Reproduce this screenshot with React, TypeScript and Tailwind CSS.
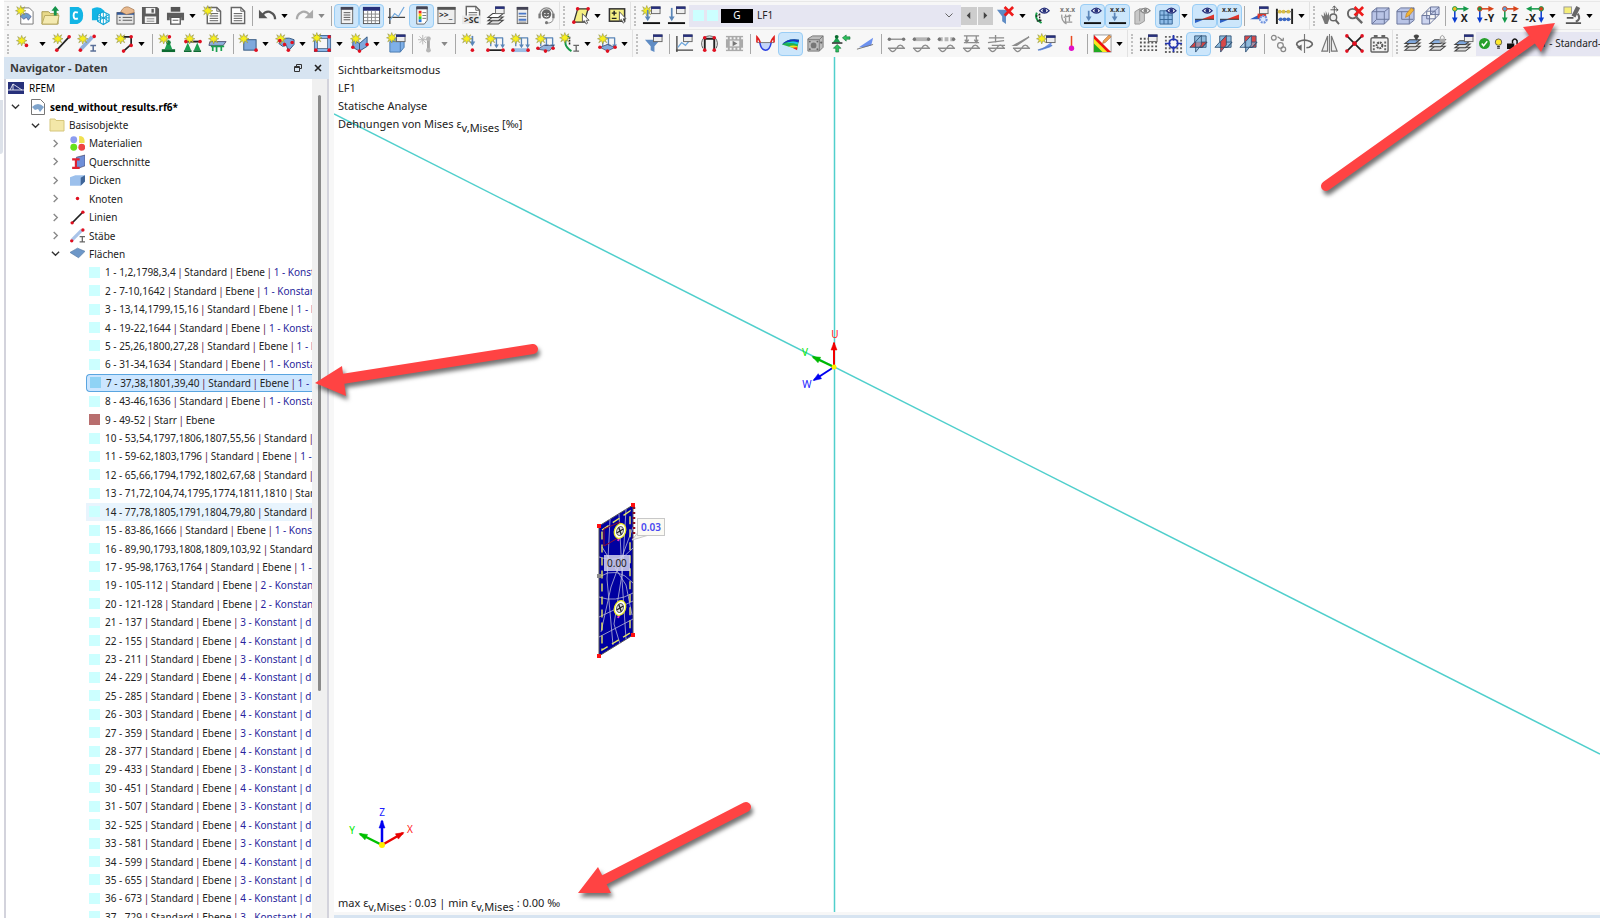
import React from 'react';
import clsx from 'clsx';

/* ---------- drawing helpers, all on a 20 x 20 grid ---------- */

const Star = ({ x = 5, y = 5 }: { x?: number; y?: number }) => (
  <path
    transform={`translate(${x} ${y})`}
    d="M0-5.5 1.2-2.2 4.2-4.2 2.6-1.1 5.5 0 2.6 1.1 4.2 4.2 1.2 2.2 0 5.5-1.2 2.2-4.2 4.2-2.6 1.1-5.5 0-2.6-1.1-4.2-4.2-1.2-2.2Z"
    fill="#f7ee1c"
    stroke="#8f8f4a"
    strokeWidth=".6"
  />
);
const Dot = ({ x, y, c = '#e01020', r = 1.9 }: { x: number; y: number; c?: string; r?: number }) => (
  <circle cx={x} cy={y} r={r} fill={c} />
);
const Win = ({ x = 10, y = 1 }: { x?: number; y?: number }) => (
  <g>
    <rect x={x} y={y} width="9" height="7" fill="#eee" stroke="#666" />
    <rect x={x - 0.5} y={y - 0.5} width="10" height="2.6" fill="#27307a" />
  </g>
);
const Eye = ({ x = 14, y = 5, c = '#27307a' }: { x?: number; y?: number; c?: string }) => (
  <g transform={`translate(${x} ${y})`}>
    <path d="M-5 0Q0-5.5 5 0Q0 5 -5 0Z" fill="#fff" stroke={c} strokeWidth="1.2" />
    <circle r="2.1" fill={c} />
  </g>
);
const Line = ({ d, c = '#444', w = 1.4 }: { d: string; c?: string; w?: number }) => (
  <path d={d} fill="none" stroke={c} strokeWidth={w} />
);
const Down = ({ x, y1, y2, c = '#5b86b8' }: { x: number; y1: number; y2: number; c?: string }) => (
  <g>
    <path d={`M${x} ${y1}V${y2 - 3}`} stroke={c} strokeWidth="1.8" />
    <path d={`M${x - 3} ${y2 - 5}h6L${x} ${y2}Z`} fill={c} />
  </g>
);
const Page = ({ x = 4, y = 1 }: { x?: number; y?: number }) => (
  <g transform={`translate(${x} ${y})`}>
    <path d="M.5.5h10l4 4v13H.5Z" fill="#fff" stroke="#666" strokeWidth="1.5" />
    <path d="M3 7h9M3 9.5h9M3 12h9M3 14.5h9" stroke="#555" />
    <path d="M10.5.5v4h4" fill="none" stroke="#666" />
  </g>
);
const Layers = ({ top = '#7ea6dc', dy = 0 }: { top?: string; dy?: number }) => (
  <g transform={`translate(0 ${dy})`} stroke="#444" strokeWidth="1.1">
    <path d="M1 17h11l5-4H6Z" fill="#ddd" />
    <path d="M1 13.500h11l5-4H6Z" fill="#ddd" />
    <path d="M1 10h11l5-4H6Z" fill={top} />
  </g>
);
const Planes = ({ a, b, c }: { a: string; b: string; c: string }) => (
  <g stroke="#2d4f72" strokeWidth=".9">
    <path d="M6 2h12v12H6Z" fill={a} />
    <path d="M1 14 6 8.500h13L14 14Z" fill={b} />
    <path d="M7 8 13 1.500v10L7 19Z" fill={c} />
    <path d="M7 14h7l5-5.500" fill="none" />
  </g>
);
const Grey = ({ k }: { k: number }) => (
  <g fill="none" stroke="#8c8c8c" strokeWidth="1.4">
    {k === 0 && <path d="M2 5.500h16" />}
    {k === 1 && <path d="M2 5.500h16" stroke="#b5b5b5" strokeWidth="4" />}
    {k === 2 && <path d="M2 5.500h16" stroke="#b5b5b5" strokeWidth="4" strokeDasharray="4 2" />}
    {k === 3 && <path d="M2 2h16M5 2v7M15 2v7M2 9h16M3 6l2 3 2-3M13 6l2 3 2-3" />}
    {k === 4 && <path d="M2 4h16M1 9l17-2M9 1v8M5 12h14" />}
    {k === 5 && <path d="M2 12 18 3 5 12Z" fill="#bbb" />}
    {k < 3 && (
      <g fill="#777" stroke="none">
        <circle cx="2.500" cy="5.500" r="1.800" />
        <circle cx="17.500" cy="5.500" r="1.800" />
      </g>
    )}
    <path d="M1 15h18M2 15Q6 22 10 15Q14 8.500 18 15" />
  </g>
);
const Axis = ({ a, b, t, o, flip = false }: { a: string; b: string; t: string; o: string; flip?: boolean }) => (
  <g>
    <path d={flip ? 'M16 3H4' : 'M4 3H15'} stroke={a} strokeWidth="1.6" />
    <path d={flip ? 'M6 0 0 3l6 3Z' : 'M13 0l6 3-6 3Z'} fill={a} />
    <path d={flip ? 'M16 3V14' : 'M4 3V14'} stroke={b} strokeWidth="1.600" />
    <path d={flip ? 'M13 12h6l-3 6Z' : 'M1 12h6l-3 6Z'} fill={b} />
    <circle cx={flip ? 16 : 4} cy="3" r="2.400" fill={o} stroke={a} />
    <text x={flip ? 5 : 14} y="17" fontSize="11" fontWeight="700" textAnchor="middle" fill="#222">
      {t}
    </text>
  </g>
);
const Loads = ({ y = 16, children }: { y?: number; children?: React.ReactNode }) => (
  <g>
    <Line d="M7 4h11M11 4v9M17.500 4v9M5 7v6" c="#5b86b8" />
    <path d="M8.500 11h5L11 15ZM15 11h5l-2.500 4Z" fill="#5b86b8" />
    {children}
    <Star x={5} y={5} />
    <Dot x={2} y={y + 1} />
    <Dot x={18} y={y + 1} />
  </g>
);
const Xs = ({ c = '#333' }: { c?: string }) => (
  <text x="10" y="6" fontSize="7" fontWeight="700" textAnchor="middle" fill={c}>
    x.x.x
  </text>
);
const Wedge = () => (
  <g>
    <path d="M0 14H10L0 18Z" fill="#2c5fc4" />
    <path d="M7 14 20 9v5Z" fill="#e0352b" />
    <Line d="M0 14h20" c="#333" w={1} />
  </g>
);

const icons: Record<string, React.ReactNode> = {
  newModel: (<><path d="M5 2h9l4 4v13H5Z" fill="#fff" stroke="#777" /><path d="M5 11q5-7 11 0l-3 4-2-3-3 2Z" fill="#6d9ccc" stroke="#447" strokeWidth=".6" /><Star /></>),
  open: (<><path d="M1 6h7l2 2h8v11H1Z" fill="#e8d98a" stroke="#a89a50" /><path d="M4 10h15l-2 9H1Z" fill="#f4eab0" stroke="#b8aa60" /><path d="M15 0l4 5h-2.500v5h-3V5H11Z" fill="#14934a" /></>),
  cloudD: (<><path d="M4 1h9q5 2 5 9t-6 9H4Z" fill="#12b5e5" /><path d="M12.500 7Q8 5 8 10t4.500 3" fill="none" stroke="#fff" strokeWidth="2" /></>),
  cloudMesh: (<><path d="M1 3q7-4 13 2v10H1Z" fill="#12b5e5" /><path d="M13 6l6 3v7l-6 3.500L7 16V9Z" fill="#fff" stroke="#12a5d5" strokeWidth="1.300" /><path d="M13 6v13M7 9l12 7M19 9 7 16M7 12.500h12M10 7.500v10M16 7.500v10" stroke="#12a5d5" /></>),
  handSheet: (<><rect x="1" y="7" width="18" height="12" fill="#e6e6e6" stroke="#555" /><path d="M1 8h18" stroke="#345a9a" strokeWidth="2.500" /><path d="M3 12h2M3 15h2M7 12h10M7 15h10" stroke="#555" /><path d="M5 6q3-6 8-5l6 3v3l-8 2Z" fill="#e8b98e" stroke="#93653d" strokeWidth=".6" /></>),
  save: (<><path d="M1 1h16l2 2v16H1Z" fill="#5c5c5c" /><rect x="5" y="2" width="10" height="6" fill="#f4f4f4" /><rect x="11" y="3" width="2.500" height="4" fill="#5c5c5c" /><rect x="4" y="11" width="12" height="7" fill="#f4f4f4" /><path d="M6 13.500h8M6 16h8" stroke="#888" /></>),
  print: (<><rect x="5" y="1" width="10" height="5" fill="#555" /><path d="M1 7h18v8h-3v-3H4v3H1Z" fill="#5c5c5c" /><path d="M5 12h10v7H5Z" fill="#fff" stroke="#555" strokeWidth="1.400" /><path d="M7 15h6" stroke="#555" /></>),
  newPage: (<><Page x={4} y={1} /><Star x={5} y={5} /></>),
  page: <Page x={3} />,
  undo: <><path d="M4 10q5-6 10-3 4 2 4 7" fill="none" stroke="#555" strokeWidth="2.400" /><path d="M1 4v9h9Z" fill="#555" /></>,
  redo: <><path d="M16 10q-5-6-10-3-4 2-4 7" fill="none" stroke="#aaa" strokeWidth="2.400" /><path d="M19 4v9h-9Z" fill="#aaa" /></>,
  navPanel: (<><rect x="4.500" y="1.500" width="12" height="17" fill="#f2f2f2" stroke="#666" /><rect x="4" y="1" width="13" height="3" fill="#445" /><path d="M7 7h7M7 9.500h7M7 12h7M7 14.500h7" stroke="#555" /></>),
  tablePanel: (<><rect x="1.500" y="1.500" width="17" height="17" fill="#fff" stroke="#555" /><rect x="1" y="1" width="18" height="4" fill="#27307a" /><path d="M2 8.500h16M2 12h16M2 15.500h16M6 5v13M10 5v13M14 5v13" stroke="#888" /></>),
  graph: <><Line d="M3 2v17M1 12h18" /><Line d="M3 15l5-7 4 3 6-10" c="#70a7dc" w={1.3} /></>,
  colorPanel: (<><path d="M5 1h11v14l-3 4H5Z" fill="#fff" stroke="#666" /><rect x="4.500" y=".5" width="12" height="3" fill="#445" /><rect x="7" y="5" width="3" height="3" fill="#e22" /><rect x="7" y="8" width="3" height="3" fill="#fc0" /><rect x="7" y="11" width="3" height="3" fill="#3c3" /><rect x="7" y="14" width="3" height="3" fill="#27d" /><path d="M11 7h4M11 10h4M11 13h4" stroke="#777" /></>),
  console: (<><rect x="1" y="1.500" width="18" height="17" fill="#eee" stroke="#666" /><rect x=".5" y="1" width="19" height="3" fill="#555" /><text x="2" y="13" fontSize="9" fontWeight="700" fill="#333">&gt;&gt;_</text></>),
  script: (<><Page x={4} y={0} /><rect x="0" y="10" width="20" height="9" fill="#e9e9e9" /><text x="10" y="18" fontSize="9" fontWeight="700" textAnchor="middle" fill="#333">&gt;SC</text></>),
  layersWin: <><Layers top="#fff" dy={2} /><Win x={9} y={1} /></>,
  formPanel: (<><rect x="5.500" y="1.500" width="11" height="17" fill="#eee" stroke="#666" /><path d="M5 2.500h12" stroke="#445" strokeWidth="3" /><path d="M7 8h8M7 14.500h8" stroke="#4a78c8" strokeWidth="2" /><path d="M7 11h8M7 17h8" stroke="#777" /></>),
  headset: (<><circle cx="10" cy="8.500" r="5" fill="#666" /><path d="M3 9a7 7 0 0 1 14 0" fill="none" stroke="#888" strokeWidth="1.300" /><rect x="1.500" y="8" width="2.500" height="5" fill="#777" /><rect x="16" y="8" width="2.500" height="5" fill="#777" /><path d="M7.500 8H9M11 8h1.500M7.500 10.500q2.500 2 5 0" stroke="#fff" fill="none" /><path d="M17 13q0 5-6 5" fill="none" stroke="#888" /><circle cx="10" cy="17.500" r="1.600" fill="#777" /></>),
  selectPoly: (<><path d="M3 17 7 3h11l-4 14Z" fill="#f5ef83" stroke="#333" strokeWidth="1.400" /><Dot x={7} y={3} /><Dot x={18} y={3} /><Dot x={3} y={17} /><path d="M12 8v9l2-1.500 2 3.500 1.500-1L16 15h3Z" fill="#fff" stroke="#555" /></>),
  plusMinus: (<><rect x="1.500" y="3" width="16" height="13" fill="#f5ef83" stroke="#333" strokeWidth="1.600" /><path d="M4 7.500h5M6.500 5v5M4 13h5" stroke="#222" strokeWidth="1.500" /><path d="M12 6v10l2-2 2 4 1.500-1L16 13.500h3Z" fill="#fff" stroke="#555" /></>),
  loadNew: <><Star /><Down x={6} y1={4} y2={16} /><Line d="M1 18h18" c="#111" w={2} /><Win /></>,
  load: <><Down x={5} y1={2} y2={16} /><Line d="M1 18h18" c="#111" w={2} /><Win /></>,
  filterX: <><path d="M1 4h15l-5.500 7v8l-4-3v-5Z" fill="#5f8cc4" /><path d="M9 1l9 9M18 1 9 10" stroke="#ee1c1c" strokeWidth="2.800" /></>,
  supportEye: <><path d="M4 7q-2 5 1 8l4 3" fill="none" stroke="#169a48" strokeWidth="2" /><path d="M7 8v9M3 11l4-2M4 16l5-1" stroke="#222" strokeDasharray="2 1" strokeWidth="1.400" /><Eye x={12} /></>,
  valuesGrey: <><Xs c="#777" /><Line d="M4 9q-1 6 5 10M8 9v9M12 9v7M6 12l8-2M7 17h8" c="#999" /></>,
  loadEye: <><Down x={6} y1={5} y2={16} /><Line d="M1 18h18" c="#111" w={2} /><Eye /></>,
  loadVals: <><Xs /><Down x={7} y1={7} y2={16} /><Line d="M1 18h18" c="#111" w={2} /></>,
  solidEye: <><path d="M2 6l5-3h5v13l-5 3H2Z" fill="#c8c8c8" stroke="#999" /><path d="M7 3v13" stroke="#999" /><Eye c="#888" x={13} /></>,
  meshEye: <><path d="M2 5h13v14H2Z" fill="#8fbce8" stroke="#386898" /><path d="M6.300 5v14M10.600 5v14M2 9.600h13M2 14.200h13" stroke="#386898" /><Eye /></>,
  resultEye: <><Wedge /><Eye x={13} /></>,
  resultVals: <><Wedge /><Xs /></>,
  resultGear: <><path d="M0 14 10 9v5Z" fill="#2c5fc4" /><path d="M8 8h9v5H8Z" fill="#e0352b" /><Win /><circle cx="14" cy="14" r="3.500" fill="#dce9ff" stroke="#6f92dc" strokeWidth="2.200" strokeDasharray="2 1" /></>,
  abacus: <><path d="M2 3v16M18 3v16" stroke="#222" strokeWidth="2" /><path d="M2 6h16M2 14h16" stroke="#555" /><Dot x={5} y={6} c="#d8bd45" r={2} /><Dot x={9} y={6} c="#d8bd45" r={2} /><Dot x={14} y={6} c="#d8bd45" r={2} /><Dot x={6} y={14} c="#3c68c4" r={2} /><Dot x={10} y={14} c="#3c68c4" r={2} /><Dot x={14} y={14} c="#3c68c4" r={2} /></>,
  handZoom: <><path d="M0 9l3 2V6l2 4V5l2 5 1-4 1 7-2 6H4Z" fill="#777" /><path d="M14 0v8M10 4h8M14 0l-2 2M14 0l2 2M18 4l-2-1.500M18 4l-2 1.500" stroke="#555" /><circle cx="13" cy="12" r="3.500" fill="#eee" stroke="#666" strokeWidth="1.500" /><path d="M15.500 15l3.500 4" stroke="#666" strokeWidth="2" /></>,
  zoomX: <><circle cx="7" cy="8" r="5" fill="#f4f4f4" stroke="#666" strokeWidth="2" /><path d="M11 12l6 6" stroke="#666" strokeWidth="2.500" /><path d="M9 1l9 9M18 1 9 10" stroke="#ee1c1c" strokeWidth="2.800" /></>,
  cube: <><path d="M1 6l5-4h13v12l-5 5H1Z" fill="#b9c4e6" stroke="#68749a" /><path d="M1 6h13v13M14 6l5-4M6 2v12h13M6 14l-5 5" fill="none" stroke="#68749a" /></>,
  cubePen: <><path d="M1 5l4-3h14v13l-5 4H1Z" fill="#b9c4e6" stroke="#68749a" /><path d="M1 6h13v13M14 6l5-4M6 6v8h12" fill="none" stroke="#68749a" /><path d="M10 12l1-4 5-6 3 2-5 6Z" fill="#f0b536" stroke="#b5701c" strokeWidth=".6" /></>,
  cubeWire: <><path d="M1 10h8v9H1ZM10 1h9v8h-9Z" fill="#ccd4ef" stroke="#68749a" /><path d="M1 10l9-9M9 19l10-10M9 10l10-9M6 5.500h9v8h-9Z" fill="none" stroke="#68749a" /></>,
  axX: <Axis a="#149a4a" b="#0a3cd0" o="#f0c020" t="X" />,
  axY: <Axis a="#d8431a" b="#0a3cd0" o="#149a4a" t="-Y" />,
  axZ: <Axis a="#d8431a" b="#149a4a" o="#5c9cd8" t="Z" />,
  axNX: <Axis a="#149a4a" b="#0a3cd0" o="#d8431a" t="-X" flip />,
  microscope: <><rect x="1" y="1" width="8" height="7" fill="#f5ee7a" stroke="#999" /><path d="M14 0l4 2-5 10-4-2Z" fill="#666" /><path d="M15.500 8q4 6-2 8.500" fill="none" stroke="#666" strokeWidth="2.200" /><path d="M4 12.500h7M3 18h16" stroke="#555" strokeWidth="2" /></>,

  node: <><Star x={6} y={7} /><Dot x={11} y={12} /></>,
  line: <><Line d="M4 17 17 3" c="#222" w={1.8} /><Star /><Dot x={4} y={17} /><Dot x={17} y={3} /></>,
  member: <><path d="M3 16 15 3" stroke="#8fb0dc" strokeWidth="4" /><Star /><Dot x={2.5} y={17} /><Dot x={17} y={2.500} /><Line d="M13 12h6M16 12v6M13 18h6" c="#5a6f98" w={1.6} /></>,
  poly: <><Line d="M7 3h10v8l-8 7" c="#222" w={1.8} /><Star x={6} /><Dot x={17} y={3} /><Dot x={17} y={12} /><Dot x={9} y={18} /></>,
  support: <><path d="M11 6 15 16H7Z" fill="#1ba050" /><circle cx="11" cy="9" r="2.500" fill="#14803c" /><path d="M4 17.500h14" stroke="#0b6a30" strokeWidth="3" /><Star x={6} /><Dot x={12} y={3} /></>,
  lineSupport: <><path d="M5 9l3.500 8h-7ZM15 9l3.500 8h-7Z" fill="#1ba050" /><path d="M1 18h8M11 18h8" stroke="#0b6a30" strokeWidth="2" /><Line d="M3 8h14" c="#222" w={2} /><Star x={7} /><Dot x={3} y={8} /><Dot x={18} y={8} /></>,
  surfSupport: <><path d="M2 8h17l-3 4H1Z" fill="#8fb0dc" stroke="#557" /><path d="M3 13h14M5 13v5M9 13v6M14 13v5" stroke="#1ba050" strokeWidth="1.800" /><Star x={6} /></>,
  surface: <><rect x="5" y="6" width="13" height="11" fill="#7fa8dc" stroke="#33577f" /><Star /><Dot x={18} y={17} /></>,
  shell: <><path d="M3 10q5-9 16-4v5l-6 7-2-6-4 1Z" fill="#7fa8dc" stroke="#33577f" /><Star /><Dot x={4} y={7} /><Dot x={17} y={9} /><Dot x={9} y={11} /><Dot x={13} y={17} /></>,
  opening: <><path d="M3 3h14v14H3Z" fill="none" stroke="#33577f" strokeWidth="4" /><path d="M3 3h14v14H3Z" fill="none" stroke="#8fb8e8" strokeWidth="2.500" /><Star x={4} y={4} /><Dot x={17} y={3} /><Dot x={17} y={17} /><Dot x={3} y={17} /></>,
  folded: <><path d="M3 6l7 4 8-7v10l-8 5-7-4Z" fill="#7fa8dc" stroke="#33577f" /><path d="M10 10v8" stroke="#33577f" /><Star x={6} /><Dot x={3} y={14} /><Dot x={10} y={18} /><Dot x={18} y={11} /></>,
  solid: <><path d="M3 8l4-3h11v9l-4 5H3Z" fill="#7fb0e8" stroke="#4a7ab0" /><path d="M3 8h11v11M14 8l4-3" fill="none" stroke="#4a7ab0" /><Star x={5} y={4} /><Win x={10} y={1} /></>,
  hinge: <g opacity=".5"><path d="M11 3v15" stroke="#555" strokeWidth="3" /><path d="M5 1v10M0 6h10M1.500 2.500l7 7M8.500 2.500l-7 7" stroke="#777" /><circle cx="11" cy="5" r="2.500" fill="#777" /><circle cx="11" cy="17" r="2.500" fill="#777" /></g>,
  nodeLoad: <><Down x={12} y1={2} y2={13} /><Star x={6} /><Dot x={12} y={17} /></>,
  lineLoad: <Loads><Line d="M2 17h16" c="#222" w={1.800} /></Loads>,
  memberLoad: <Loads><Line d="M2 17h16" c="#9dbde4" w={4} /></Loads>,
  surfLoad: <Loads y={14}><path d="M2 16 8 12h11l-5 6Z" fill="#8fb0dc" stroke="#335" strokeWidth=".7" /><Dot x={10} y={18} /></Loads>,
  imperf: <><path d="M8 2q-8 9 3 16" fill="none" stroke="#169a48" strokeWidth="2" /><path d="M9 3v9" stroke="#222" strokeDasharray="2 1" strokeWidth="1.600" /><Star x={4} y={4} /><Line d="M13 12h6M16 12v6M13 18h6" c="#666" /></>,
  freeLoad: <Loads y={13}><path d="M2 14l8-3 8 3-8 4Z" fill="#7fa8dc" stroke="#335" strokeWidth=".7" /><Dot x={10} y={18} /></Loads>,
  filterWin: <><path d="M1 6h16l-6 7v6l-4-2v-4Z" fill="#5f8cc4" /><Win /></>,
  diagram: <><Line d="M2 2v17M1 17h18" /><Line d="M3 14l4-5 4 3 5-6" c="#70a7dc" /><Win x={9} y={1} /></>,
  frame: <><path d="M5 17V5h10v12" fill="none" stroke="#222" strokeWidth="2" /><path d="M4 4q6-4 12 0M3 15Q0 9 4 4M17 15q3-6-1-11" fill="none" stroke="#555" /><Dot x={5} y={4} /><Dot x={15} y={4} /><Dot x={5} y={17} /><Dot x={15} y={17} /></>,
  film: <><rect x="1" y="2" width="18" height="16" fill="#aaa" /><path d="M1 4.500h18M1 15.500h18" stroke="#f4f4f4" strokeWidth="2" strokeDasharray="2 2" /><rect x="5" y="7" width="10" height="6" fill="#eee" /><path d="M8 7v6l5-3Z" fill="#777" /></>,
  moment: <><path d="M4 9h12q-1 8-6 8T4 9Z" fill="#c4d4f8" /><path d="M1 9h18" stroke="#777" /><path d="M4 9q1.500 8 6 8t6-8" fill="none" stroke="#2a3ee0" strokeWidth="1.600" /><path d="M1 9V3q2 2 3.500 6M19 9V3q-2 2-3.500 6" fill="none" stroke="#e02020" strokeWidth="1.700" /></>,
  contour: <><path d="M1 11q6-7 18-5l-2 10Z" fill="#22b14c" /><path d="M1 11q6-7 18-5l-.5 3Q8 6 1 11Z" fill="#1930c8" /><path d="M3 11q8-5 15-2l-.4 2Q9 8 3 11Z" fill="#19c8e8" /><path d="M8 13q5-2 9.500 0L17 16Z" fill="#f5e020" /><path d="M12 14.500l5-.5v3Z" fill="#e22" /></>,
  dice: <><path d="M2 5l5-3h11v12l-4 4H2Z" fill="#bbb" stroke="#777" /><path d="M2 6h12v12M14 6l4-4" fill="none" stroke="#777" /><circle cx="8" cy="12" r="3" fill="#777" /><Dot x={4} y={8} c="#666" r={1} /><Dot x={12} y={8} c="#666" r={1} /><Dot x={4} y={16} c="#666" r={1} /><Dot x={12} y={16} c="#666" r={1} /><Dot x={16} y={9} c="#666" r={1.2} /></>,
  reaction: <><path d="M6 3l4 6H2Z" fill="#1ba050" /><circle cx="6" cy="3" r="2" fill="#0b6a30" /><path d="M1 9.500h11" stroke="#222" strokeWidth="1.500" /><path d="M12 4l4-3v2h4v2.500h-4v2Z" fill="#2cc05c" stroke="#0b6a30" strokeWidth=".6" /><path d="M6.500 11l4 4H8v4H5v-4H2.500Z" fill="#2cc05c" stroke="#0b6a30" strokeWidth=".6" /></>,
  blade: <><path d="M3 14 18 4l-2 8-7 2Z" fill="#6d92f0" /><Line d="M1 16 18 11" c="#777" w={1} /></>,
  g0: <Grey k={0} />, g1: <Grey k={1} />, g2: <Grey k={2} />, g3: <Grey k={3} />, g4: <Grey k={4} />, g5: <Grey k={5} />,
  bladeNew: <><path d="M2 18 16 8l-2 6Z" fill="#6d92f0" /><Line d="M1 17l15-5" c="#5a80c8" /><Star /><Win x={10} y={2} /></>,
  pin: <><Line d="M10 2v12" c="#e84a20" w={1.600} /><Dot x={10} y={15} c="#e010c8" r={2.8} /></>,
  palette: <><rect x="1" y="1" width="18" height="18" fill="#fff" stroke="#999" /><path d="M1 19V1l18 18Z" fill="#e11" /><path d="M1 19V5l14 14Z" fill="#f7ea20" /><path d="M1 19v-9l9 9Z" fill="#2a2" /><path d="M10 10l1-3 6-6 2 2-6 6Z" fill="#f0a050" stroke="#a85a20" strokeWidth=".6" /></>,
  gridWin: <><path d="M2 4v16M6 4v16M10 4v16M14 4v16M18 8v12" stroke="#555" strokeWidth="2" strokeDasharray="2 2" /><Win x={10} y={1} /></>,
  snap: <><path d="M2 2v18M6 2v18M10 2v18M14 2v18M18 2v18" stroke="#666" strokeWidth="2" strokeDasharray="2 2" /><circle cx="10" cy="10" r="4.500" fill="#f7f7f7" stroke="#2334b0" strokeWidth="1.800" /><path d="M10 1v6M10 13v6M1 10h6M13 10h6" stroke="#2334b0" strokeWidth="1.800" /></>,
  planeA: <Planes a="#8fbadc" b="#cf4444" c="#8fbadc99" />,
  planeB: <Planes a="#8fbadc" b="#8fbadc" c="#d84848" />,
  planeC: <Planes a="#d84848" b="#8fbadc99" c="#8fbadc" />,
  chain: <g fill="none" stroke="#888" strokeWidth="1.300"><circle cx="4" cy="4" r="2.500" /><circle cx="11" cy="12" r="3" /><circle cx="14" cy="16" r="2.500" /><path d="M8 3l6 4M14 7l-3-.500M14 7v-3" /></g>,
  rotate: <><Line d="M10 0v20" c="#777" w={1.200} /><path d="M5 14Q-1 11 4 8q6-3 12 0 5 3-1 6l-3 .5" fill="none" stroke="#666" strokeWidth="1.800" /><path d="M7 11v7l-5-4Z" fill="#666" /></>,
  mirror: <><path d="M8 2v16H2ZM12 2v16h6Z" fill="#eee" stroke="#777" strokeWidth="1.300" /><Line d="M10 0v20" c="#777" w={1} /></>,
  explode: <><Line d="M2 2l16 16M18 2 2 18" c="#222" w={1.800} /><Dot x={2} y={2} /><Dot x={18} y={2} /><Dot x={2} y={18} /><Dot x={18} y={18} /><Dot x={10} y={10} r={2.5} /></>,
  calc: <><rect x="1" y="4" width="18" height="15" rx="2" fill="#f2f2f2" stroke="#666" strokeWidth="1.500" /><path d="M4 2.500h4M12 2.500h4" stroke="#666" strokeWidth="3" /><circle cx="10" cy="12" r="3" fill="none" stroke="#555" strokeWidth="2.200" strokeDasharray="2 .8" /><path d="M4 8v9M16 8v9" stroke="#666" strokeWidth="2" strokeDasharray="2 1.500" /></>,
  layPin: <><Layers /><path d="M13 7l-3-5q3-3 6 0Z" fill="#444" /></>,
  layLock: <><Layers top="#8ab0e0" /><rect x="11" y="5" width="6" height="4" fill="#aaa" /><path d="M12 5V3q2-3 4 0v2" fill="none" stroke="#999" /></>,
  layWin: <><Layers dy={1} /><Win x={11} y={1} /></>,
};

/* ---------- toolbar pieces ---------- */

const Icon = ({ name, on }: { name: string; on?: boolean }) => (
  <button
    type="button"
    aria-label={name}
    className={clsx('flex h-6 w-[25px] flex-none items-center justify-center rounded-sm', on && 'border border-[#99cdf5] bg-[#cce6fb]')}
  >
    <svg viewBox="0 0 20 20" className="h-[19px] w-[19px] flex-none overflow-visible">{icons[name]}</svg>
  </button>
);
const Caret = ({ grey }: { grey?: boolean }) => (
  <button type="button" aria-label="Auswahl" className="flex h-6 w-3 flex-none items-center pl-px">
    <svg viewBox="0 0 8 5" className="h-1 w-[7px]"><path d="M0 0h8L4 5Z" fill={grey ? '#888' : '#000'} /></svg>
  </button>
);
const Grip = ({ first }: { first?: boolean }) => (
  <span className={clsx('flex h-7 flex-none items-center', first ? 'w-[9px] pl-[3px]' : 'w-[9px] border-l border-[#e2e2e2] pl-[3px]')}>
    <span className="h-5 border-l-2 border-dotted border-[#c0c0c0]" />
  </span>
);
const Sep = ({ wide }: { wide?: boolean }) => (
  <span className={clsx('flex flex-none justify-center', wide ? 'w-1.5' : 'w-[5px]')}>
    <span className="h-5 w-px bg-[#a8a8a8]" />
  </span>
);

/* "*" highlights an icon, "v" is a caret, "V" a disabled caret, "|" a rule, "#" a new toolbar */
const Tools = ({ list, wide }: { list: string; wide?: boolean }) => (
  <>
    {list.split(' ').map((t, i) => {
      if (t === 'v' || t === 'V') return <Caret key={i} grey={t === 'V'} />;
      if (t === '|') return <Sep key={i} wide={wide} />;
      if (t === '#') return <Grip key={i} />;
      return <Icon key={i} name={t.replace('*', '')} on={t.startsWith('*')} />;
    })}
  </>
);

const Toolbars = () => (
  <header className="flex-none overflow-hidden bg-[#f7f7f7] pt-px">
    <div className="flex h-7 items-center border-t border-[#e8e8e8]">
      <Grip first />
      <Tools list="newModel open cloudD cloudMesh handSheet save print v newPage page | undo v redo V | *navPanel *tablePanel graph *colorPanel console script layersWin formPanel headset # selectPoly v plusMinus # loadNew load" />
      <div className="flex h-[22px] w-[272px] flex-none items-center gap-[3px] bg-[#e6e6f2] pl-1 pr-2">
        <span className="size-[11px] bg-[#ccffff]" />
        <span className="size-[11px] bg-[#ccffff]" />
        <span className="flex h-[14px] w-8 items-center justify-center bg-black text-[10px] text-white">G</span>
        <select aria-label="Lastfall" className="ml-px h-5 min-w-0 flex-1 appearance-none bg-transparent text-[10px] text-[#222]">
          <option>LF1</option>
        </select>
        <svg viewBox="0 0 8 5" className="h-[5px] w-2"><path d="M.5.5 4 4 7.500.5" fill="none" stroke="#666" /></svg>
      </div>
      <div className="flex w-8 flex-none gap-px">
        {['M6 0v8L2 4Z', 'M2 0v8l4-4Z'].map((d, i) => (
          <button key={d} type="button" aria-label={i ? 'Weiter' : 'Zurück'} className="flex h-[18px] flex-1 items-center justify-center bg-[#cdcdcd]">
            <svg viewBox="0 0 8 8" className="size-[7px]"><path d={d} fill="#444" /></svg>
          </button>
        ))}
      </div>
      <Tools list="filterX v supportEye valuesGrey *loadEye *loadVals solidEye *meshEye v *resultEye *resultVals | resultGear abacus v # handZoom zoomX cube cubePen cubeWire | axX axY axZ axNX v microscope v" />
    </div>
    <div className="flex h-7 items-center border-t border-[#e8e8e8]">
      <Grip first />
      <Tools
        wide
        list="node v line member v poly v | support lineSupport surfSupport | surface v shell v opening v folded v solid | hinge V | nodeLoad lineLoad memberLoad surfLoad imperf v freeLoad v # filterWin | diagram frame film | moment *contour dice reaction blade | g0 g1 g2 g3 g4 g5 bladeNew pin | palette v # gridWin snap *planeA planeB planeC | chain rotate mirror explode calc # layPin layLock layWin"
      />
      <div className="flex h-6 min-w-0 flex-1 items-center gap-[3px] bg-[#e6e6f2] pl-[3px]">
        <svg viewBox="0 0 12 12" className="size-[11px] flex-none"><circle cx="6" cy="6" r="6" fill="#27a02c" /><path d="M3 6l2 2.500 4-5" fill="none" stroke="#fff" strokeWidth="1.500" /></svg>
        <svg viewBox="0 0 12 12" className="size-[11px] flex-none"><circle cx="6" cy="4.500" r="3.500" fill="#ffe92a" stroke="#555" /><path d="M4.500 9.500h3M4.500 11.200h3" stroke="#333" strokeWidth="1.300" /></svg>
        <svg viewBox="0 0 12 12" className="size-[11px] flex-none"><path d="M0 6h8v6H0Z" fill="#111" /><path d="M6 6V3q2.500-4 5 0v4" fill="none" stroke="#111" strokeWidth="1.600" /></svg>
        <select aria-label="Ebene" className="ml-5 h-5 min-w-0 flex-1 appearance-none overflow-hidden bg-transparent text-[10px] text-[#222]">
          <option>1 - Standard-Ebene</option>
        </select>
      </div>
    </div>
  </header>
);

/* ---------- navigator ---------- */

const Chevron = ({ open }: { open?: boolean }) => (
  <svg viewBox="0 0 10 10" className="size-[9px] flex-none">
    <path d={open ? 'M1 3l4 4 4-4' : 'M3 1l4 4-4 4'} fill="none" stroke={open ? '#333' : '#888'} strokeWidth="1.500" />
  </svg>
);

const treeIcons: Record<string, React.ReactNode> = {
  Materialien: <><circle cx="3.500" cy="3.500" r="3.200" fill="#8c9cf0" /><path d="M8.500 0q6 0 5 6.500h-5Z" fill="#f0e050" /><circle cx="3.500" cy="10.500" r="3.200" fill="#67e01c" /><circle cx="11" cy="10.500" r="3.200" fill="#ee4444" /></>,
  Querschnitte: <><path d="M6 3l8-2v10l-8 3Z" fill="#6f8fd8" stroke="#446" strokeWidth=".6" /><path d="M2 5h7M5.500 5v8M2 13h7" stroke="#e02030" strokeWidth="2" /></>,
  Dicken: <><path d="M0 4l5-2h9v6l-4 4H0Z" fill="#9cc0ec" /><path d="M10 4.500l4-2.500v6l-4 4Z" fill="#3f6598" /></>,
  Knoten: <circle cx="7" cy="7" r="1.600" fill="#e01020" />,
  Linien: <><path d="M2 12 12 2" stroke="#222" strokeWidth="1.400" /><Dot x={2} y={12} r={1.6} /><Dot x={12} y={2} r={1.6} /></>,
  'Stäbe': <><path d="M2 11 11 2" stroke="#a9c3e8" strokeWidth="3" /><Dot x={1.600} y={12} r={1.6} /><Dot x={12} y={1.800} r={1.6} /><path d="M9 8h5M11.500 8v5M9 13h5" stroke="#666" strokeWidth="1.200" /></>,
  'Flächen': <path d="M0 6l7-4 7 3-6 6Z" fill="#6d97c8" stroke="#5379a5" strokeWidth=".6" />,
};

const K = '1 - Konstant | d';
const surfaces: string[] = [
  `1 - 1,2,1798,3,4 | Standard | Ebene | ${K}`,
  `2 - 7-10,1642 | Standard | Ebene | ${K}`,
  `3 - 13,14,1799,15,16 | Standard | Ebene | ${K}`,
  `4 - 19-22,1644 | Standard | Ebene | ${K}`,
  `5 - 25,26,1800,27,28 | Standard | Ebene | ${K}`,
  `6 - 31-34,1634 | Standard | Ebene | ${K}`,
  `7 - 37,38,1801,39,40 | Standard | Ebene | ${K}`,
  `8 - 43-46,1636 | Standard | Ebene | ${K}`,
  '9 - 49-52 | Starr | Ebene',
  '10 - 53,54,1797,1806,1807,55,56 | Standard | Ebene',
  `11 - 59-62,1803,1796 | Standard | Ebene | ${K}`,
  '12 - 65,66,1794,1792,1802,67,68 | Standard | Ebene',
  '13 - 71,72,104,74,1795,1774,1811,1810 | Standard',
  '14 - 77,78,1805,1791,1804,79,80 | Standard | Ebene',
  `15 - 83-86,1666 | Standard | Ebene | ${K}`,
  '16 - 89,90,1793,1808,1809,103,92 | Standard | Ebene',
  `17 - 95-98,1763,1764 | Standard | Ebene | ${K}`,
  '19 - 105-112 | Standard | Ebene | 2 - Konstant | d',
  '20 - 121-128 | Standard | Ebene | 2 - Konstant | d',
  ...[137, 155, 211, 229, 285, 303, 359, 377, 433, 451, 507, 525, 581, 599, 655, 673, 729].map(
    (n, i) => `${21 + i} - ${n} | Standard | Ebene | ${i % 2 ? 4 : 3} - Konstant | d`,
  ),
];

const SurfaceRow = ({ text }: { text: string }) => {
  const parts = text.split(' | ');
  const id = Number(text.split(' ')[0]);
  return (
    <li
      className={clsx(
        'ml-20 flex items-center overflow-hidden whitespace-pre pl-[3px]',
        id === 7 && 'rounded-l-sm border border-r-0 border-[#5aa5e0] bg-[#cce6ff] pl-[2px]',
        id === 14 && 'bg-[#e8f4fd]',
      )}
    >
      <span className={clsx('mr-[5px] size-[11px] flex-none', id === 7 ? 'bg-[#8fd3f5]' : id === 9 ? 'bg-[#b86e6e]' : 'bg-[#ccffff]')} />
      {parts.map((p, i) => (
        <span key={i} className={i > 2 ? 'text-[#2a1f9c]' : 'text-[#222]'}>
          {i > 0 && <span className={i > 3 ? '' : 'text-[#5a1a4a]'}>{' '}<span className="-mx-px">|</span>{' '}</span>}
          {p}
        </span>
      ))}
    </li>
  );
};

const Navigator = () => (
  <aside className="flex w-[325px] flex-none flex-col bg-white">
    <div className="flex h-[22px] flex-none items-center bg-[#d7e4f1] pl-1.5 pr-[7px] text-[#3a3a3a]">
      <h1 className="flex-1 pt-px text-[11px] font-bold">Navigator - Daten</h1>
      <button type="button" aria-label="Abdocken" className="mr-3">
        <svg viewBox="0 0 8 8" className="size-2"><path d="M2.500 2.500v-2h5v4h-2M.5 2.500h5v5h-5ZM.5 3.500h5" fill="none" stroke="#333" /></svg>
      </button>
      <button type="button" aria-label="Schließen">
        <svg viewBox="0 0 8 8" className="size-2"><path d="M1 1l6 6M7 1 1 7" stroke="#222" strokeWidth="1.600" /></svg>
      </button>
    </div>
    <div className="flex min-h-0 flex-1 overflow-hidden border-x-2 border-[#d3d3dc]">
      <ul className="grid h-[847px] min-w-0 flex-1 auto-rows-fr text-[10px] leading-[14px]">
        <li className="flex items-center gap-[5px] pl-0.5">
          <svg viewBox="0 0 16 12" className="h-3 w-4"><path d="M0 0h16v12H0Z" fill="#27307a" /><path d="M0 8h16M2 8l3-6 9 6M5 2v6" fill="none" stroke="#fff" strokeWidth=".8" /></svg>
          RFEM
        </li>
        <li className="flex items-center gap-[5px] pl-[5px]">
          <Chevron open />
          <svg viewBox="0 0 14 16" className="ml-1.5 h-4 w-[14px]"><path d="M.5.5h9l4 4v11H.5Z" fill="#fff" stroke="#777" /><path d="M1 8q6-6 12 0l-4 5-2-3-3 1Z" fill="#7fa4cc" /></svg>
          <span className="font-bold text-black">send_without_results.rf6*</span>
        </li>
        <li className="flex items-center gap-1 pl-[25px]">
          <Chevron open />
          <svg viewBox="0 0 16 14" className="ml-[5px] h-[14px] w-4"><path d="M1 1h5l1 1.500h8V13H1Z" fill="#f3e7a8" stroke="#d5c67c" /></svg>
          <span className="text-[#222]">Basisobjekte</span>
        </li>
        {Object.keys(treeIcons).map((n) => (
          <li key={n} className="flex items-center gap-1 pl-[45px]">
            <Chevron open={n === 'Flächen'} />
            <svg viewBox="0 0 14 14" className="ml-1.5 size-[15px]">{treeIcons[n]}</svg>
            <span className="text-[#222]">{n}</span>
          </li>
        ))}
        {surfaces.map((s) => <SurfaceRow key={s} text={s} />)}
      </ul>
      <div className="flex w-[15px] flex-none justify-center bg-[#f0f0f0] pt-4">
        <span className="h-[596px] w-[3px] rounded bg-[#8a8a8a]" />
      </div>
    </div>
  </aside>
);

/* ---------- work area ---------- */

const Eps = () => <>ε<sub className="-bottom-1 text-[11px]">v,Mises</sub></>;

const Head = ({ x1, y1, x2, y2, c, w = 2 }: { x1: number; y1: number; x2: number; y2: number; c: string; w?: number }) => {
  const a = (Math.atan2(y2 - y1, x2 - x1) * 180) / Math.PI;
  return (
    <g stroke={c} fill={c}>
      <path d={`M${x1} ${y1}L${x2} ${y2}`} strokeWidth={w} />
      <path d="M1 0-7-3v6Z" transform={`translate(${x2} ${y2}) rotate(${a})`} strokeWidth=".5" />
    </g>
  );
};

const Bolt = ({ x, y }: { x: number; y: number }) => (
  <g transform={`translate(${x} ${y}) rotate(20)`}>
    <ellipse rx="5.500" ry="7.500" fill="#fff" stroke="#e8e820" strokeWidth="1.300" />
    <ellipse rx="3.300" ry="4.500" fill="#ddd" stroke="#666" />
    <path d="M-2.500-3l5 6M2.500-3l-5 6" stroke="#222" strokeWidth="1.300" />
  </g>
);

/* The scene's origin is the top left corner of the work area. */
const Scene = () => (
  <svg className="absolute inset-0 h-full w-full" fontSize="10">
    <path d="M0 57 1266 697" stroke="#50cfcc" strokeWidth="1.500" />
    <path d="M500.500 0v3000" stroke="#50cfcc" strokeWidth="1.500" />
    <Head x1={500} y1={310} x2={500} y2={286} c="#f00000" />
    <Head x1={500} y1={310} x2={479} y2={300} c="#00b800" />
    <Head x1={500} y1={310} x2={480} y2={323} c="#0000f0" />
    <circle cx="500" cy="310" r="2.500" fill="#ffee00" />
    <text x="501" y="281" textAnchor="middle" fill="#ff2020">U</text>
    <text x="471" y="299" textAnchor="middle" fill="#00e800">V</text>
    <text x="473" y="331" textAnchor="middle" fill="#2020ff">W</text>

    <path d="M265 469 299 448V578L265 599Z" fill="#0000a0" stroke="#555" />
    <path d="M265 500q20 8 34-9M265 520q18-12 34 6M265 540q16 6 34-4M265 560l34-16M265 580l34-18M276 462l-3 60 6 66M285 457l3 60-8 50 6 20M292 452l-4 70 4 60M299 470l-22 60-10 45M268 490l24 38 6 30" fill="none" stroke="#b8b8d8" strokeWidth=".8" />
    <path d="M268 473 296 454V576L268 593Z" fill="none" stroke="#e8e860" strokeWidth="1.400" strokeDasharray="8 5" />
    <path d="M270 472l16-7-2 16-14 8Z" fill="none" stroke="#901030" />
    <path d="M300 450v34" stroke="#901020" strokeWidth="2.500" strokeDasharray="2 3" />
    <path d="M286 556l-2 5M286 479l-2 5" stroke="#e838c8" strokeWidth="2" />
    <Bolt x={286} y={474} />
    <Bolt x={286} y={551} />
    <g fill="#ff1010">
      <rect x="263" y="467" width="4" height="4" />
      <rect x="297" y="446" width="4" height="4" />
      <rect x="297" y="576" width="4" height="4" />
      <rect x="263" y="597" width="4" height="4" />
    </g>
    <path d="M298 483l27-8-20-1Z" fill="#f7f6f0" stroke="#c8c8c8" />
    <rect x="263" y="517" width="4" height="4" fill="#888" />

    <Head x1={48} y1={788} x2={48} y2={764} c="#0000f0" w={2.5} />
    <Head x1={48} y1={788} x2={69} y2={776} c="#e80000" w={2.5} />
    <Head x1={48} y1={788} x2={26} y2={777} c="#00c000" w={2.5} />
    <circle cx="48" cy="788" r="3" fill="#ffee00" />
    <text x="48" y="759" textAnchor="middle" fill="#2020ff">Z</text>
    <text x="76" y="776" textAnchor="middle" fill="#ff2020">X</text>
    <text x="18" y="777" textAnchor="middle" fill="#00e800">Y</text>
  </svg>
);

const WorkArea = () => (
  <main className="flex min-w-0 flex-1 flex-col bg-[#f7f7f7] pl-[5px]">
    <div className="relative flex min-h-0 flex-1 flex-col justify-between overflow-hidden bg-white pl-1 text-[11px] text-[#222]">
      <Scene />
      <div className="relative pt-1 leading-[18px]">
        <p>Sichtbarkeitsmodus</p>
        <p>LF1</p>
        <p>Statische Analyse</p>
        <p>Dehnungen von Mises <Eps /> [‰]</p>
      </div>
      <p className="relative leading-[18px]">max <Eps /> : 0.03 | min <Eps /> : 0.00 ‰</p>
      <span className="absolute left-[303px] top-[461px] border border-[#c8c8c8] bg-[#fbfaf4] px-[3px] text-[10px] font-semibold leading-4 text-[#4848f0]">0.03</span>
      <span className="absolute left-[270px] top-[498px] bg-[#d4d4ecd9] px-[3px] text-[10px] leading-4 text-[#222]">0.00</span>
    </div>
    <div className="h-[3px] flex-none" />
    <div className="h-[3px] flex-none bg-[#d7e4f1]" />
  </main>
);

/* Callout arrows drawn over the whole window. */
const Arrows = () => (
  <svg className="pointer-events-none absolute inset-0 h-full w-full drop-shadow-[2px_4px_2px_rgba(0,0,0,0.55)]">
    <g fill="#ff4343" stroke="#ff4343">
      <path d="M1326 186 1534 38M533 349 342 379M746 807 604 880" strokeWidth="10" strokeLinecap="round" />
      <path d="M1555 23 1523 27 1541 52ZM315 383 342 366 346 396ZM578 893 598 867 611 893Z" stroke="none" />
    </g>
  </svg>
);

export default function App() {
  return (
    <div className="relative flex h-screen overflow-hidden bg-white font-['Noto_Sans','Open_Sans',sans-serif]">
      <div className="w-1 flex-none bg-white pt-[100px]">
        <div className="h-[54px] w-[3px] rounded-br bg-[#dde2ea]" />
      </div>
      <div className="flex min-w-0 flex-1 flex-col">
        <Toolbars />
        <div className="flex min-h-0 flex-1">
          <Navigator />
          <WorkArea />
        </div>
      </div>
      <Arrows />
    </div>
  );
}
